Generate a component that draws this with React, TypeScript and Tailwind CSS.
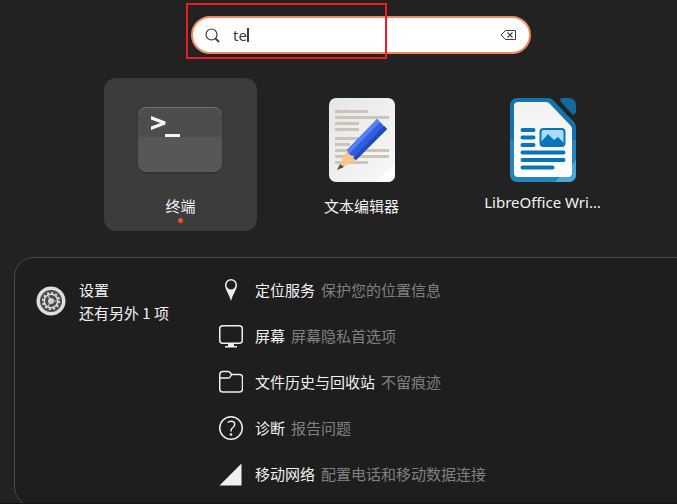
import { useState } from "react";
import type { ReactNode } from "react";

type Result = { title: string; description: string; icon: ReactNode };

function TerminalIcon() {
  return (
    <svg width="87" height="68" viewBox="0 0 87 68" aria-hidden="true">
      <defs>
        <clipPath id="terminal-body">
          <rect x="1" y="1" width="84" height="65" rx="8" />
        </clipPath>
      </defs>
      <rect x="0.5" y="1" width="85" height="66.5" rx="8.5" fill="#303030" />
      <g clipPath="url(#terminal-body)">
        <rect x="1" y="1" width="84" height="30" fill="#4d4d4d" />
        <rect x="1" y="31" width="84" height="35" fill="#575757" />
      </g>
      <path d="M2 8a7 7 0 0 1 7-6.500h68a7 7 0 0 1 7 6.500" fill="none" stroke="#727272" />
      <path d="M14 10v3.600L23.500 17 14 20.500V24l14.500-5.600v-2.800z" fill="#f4f4f4" />
      <rect x="28" y="28" width="15" height="3" fill="#f4f4f4" />
    </svg>
  );
}

function EditorIcon() {
  return (
    <svg width="66" height="84" viewBox="0 0 66 84" aria-hidden="true">
      <defs>
        <linearGradient id="paper" x1="0" y1="0" x2="1" y2="1">
          <stop offset="0" stopColor="#e6e6e6" />
          <stop offset="1" stopColor="#f8f8f8" />
        </linearGradient>
      </defs>
      <rect width="66" height="84" rx="7" fill="url(#paper)" />
      <path d="M66 65v12a7 7 0 0 1-7 7H47z" fill="#fff" />
      <g fill="#c9c5b9">
        <rect x="6" y="12" width="33" height="3" />
        <rect x="6" y="18" width="54" height="3" />
        <rect x="6" y="24" width="24" height="3" />
        <rect x="6" y="30" width="24" height="3" />
        <rect x="6" y="39" width="33" height="3" />
        <rect x="6" y="45" width="15" height="3" />
        <rect x="6" y="51" width="54" height="3" />
        <rect x="6" y="57" width="54" height="3" />
        <rect x="6" y="63" width="33" height="3" />
      </g>
      <path d="M8 72 18 52l10 10z" fill="#ffc58b" />
      <path d="M8 72l3-6 4 3z" fill="#505050" />
      <path d="M18 52 48 21l10 10-31 31-2-4-4-1z" fill="#2f5fe0" />
      <path d="M18 52 48 21l3 3-31 32z" fill="#5482f2" />
      <path d="M24 60 55 28l3 3-31 31z" fill="#204bb8" />
    </svg>
  );
}

function WriterIcon() {
  return (
    <svg width="66" height="84" viewBox="0 0 66 84" aria-hidden="true">
      <defs>
        <linearGradient id="sheet" x1="0" y1="0" x2="0" y2="1">
          <stop offset="0" stopColor="#f1f1f1" />
          <stop offset="1" stopColor="#ffffff" />
        </linearGradient>
        <clipPath id="writer-edge">
          <path d="M7 0h31q3 0 5 2l21 22q2 2 2 5v48a7 7 0 0 1-7 7H7a7 7 0 0 1-7-7V7a7 7 0 0 1 7-7z" />
        </clipPath>
      </defs>
      <g clipPath="url(#writer-edge)">
        <rect width="66" height="42" fill="#1573ab" />
        <rect y="42" width="66" height="42" fill="#2584bd" />
        <path d="M66 62v22H45z" fill="#48a9d8" />
      </g>
      <path d="M8 4h28q2 0 4 2l20 21q2 2 2 4v44a4 4 0 0 1-4 4H8a4 4 0 0 1-4-4V8a4 4 0 0 1 4-4z" fill="url(#sheet)" />
      <path d="M52 0h7a7 7 0 0 1 7 7v7q-2 5-5 1L51 4q-2-4 1-4z" fill="#1269a0" />
      <g stroke="#0875b9" strokeWidth="4" strokeLinecap="round">
        <path d="M12.500 32h11M12.500 39.500h11M12.500 47h11M12.500 54.500h41M12.500 62h41M12.500 69.500h30" />
      </g>
      <rect x="30.500" y="31" width="24" height="17" rx="3" fill="#a9dcf9" stroke="#0875b9" strokeWidth="2" />
      <path d="M31 44l7-8 6 6 4-3 6 6v3H31z" fill="#0875b9" />
    </svg>
  );
}

function SettingsIcon() {
  return (
    <svg width="30" height="30" viewBox="0 0 30 30" aria-hidden="true" className="shrink-0">
      <circle cx="15" cy="15" r="14.500" fill="#dedede" />
      <circle cx="15" cy="15" r="11" fill="#4b4b4b" />
      <circle cx="15" cy="15" r="8.200" fill="none" stroke="#dedede" strokeWidth="1.800" strokeDasharray="2.100 2.193" />
      <circle cx="15" cy="15" r="6.800" fill="none" stroke="#dedede" strokeWidth="1.500" />
      <path d="M15 15 12 9.500M15 15h6.500M15 15l-3 5.500" stroke="#bdbdbd" strokeWidth="1.200" />
      <circle cx="15" cy="15" r="3" fill="#cfcfcf" />
    </svg>
  );
}

const line = { fill: "none", stroke: "#efefef", strokeWidth: 1.5 } as const;

const results: Result[] = [
  {
    title: "定位服务",
    description: "保护您的位置信息",
    icon: (
      <path
        d="M12 1a6 6 0 0 0-6 6c0 4 4 9 6 16 2-7 6-12 6-16a6 6 0 0 0-6-6zm0 1.500a4.500 4.500 0 1 1 0 9 4.500 4.500 0 0 1 0-9z"
        fill="#efefef"
        fillRule="evenodd"
      />
    ),
  },
  {
    title: "屏幕",
    description: "屏幕隐私首选项",
    icon: (
      <>
        <rect x="0.750" y="1.750" width="22.500" height="17.500" rx="3" {...line} />
        <path d="M9 19h6v3h3v1.500H6V22h3z" fill="#efefef" />
      </>
    ),
  },
  {
    title: "文件历史与回收站",
    description: "不留痕迹",
    icon: (
      <>
        <path d="M.75 18V4.500a3 3 0 0 1 3-3H9q1.500 0 2.500 1.500l1 1.500h8a3 3 0 0 1 3 3V19a3 3 0 0 1-3 3H3.750a3 3 0 0 1-3-3z" {...line} />
        <path d="M.75 8h8.500q1.500 0 2.300-1.500l1-2" {...line} />
      </>
    ),
  },
  {
    title: "诊断",
    description: "报告问题",
    icon: (
      <>
        <circle cx="12" cy="12" r="11.250" {...line} />
        <path d="M8.700 6.500q1.300-1.300 3.300-1.300 3.700 0 3.700 3 0 1.800-1.800 3.300-1.900 1.500-1.900 3.300v.7" {...line} />
        <circle cx="12" cy="18.500" r="1.300" fill="#efefef" />
      </>
    ),
  },
  {
    title: "移动网络",
    description: "配置电话和移动数据连接",
    icon: <path d="M.5 23.500 22.500 1.500v22z" fill="#efefef" />,
  },
];

function AppTile({ name, icon, active }: { name: string; icon: ReactNode; active?: boolean }) {
  return (
    <button
      type="button"
      className={
        active
          ? "flex h-[153px] w-[153px] flex-col items-center rounded-xl bg-[#3c3c3c] pt-5"
          : "flex h-[153px] w-[153px] flex-col items-center rounded-xl pt-5"
      }
    >
      <span className="flex h-[84px] items-center justify-center">{icon}</span>
      {/* Latin labels sit on a shorter line than Chinese ones */}
      <span className={/^[A-Z]/.test(name) ? "mt-3 leading-4" : "mt-3 leading-6"}>{name}</span>
      {active && <span className="size-[5px] rounded-full bg-[#e95420]" />}
    </button>
  );
}

export default function App() {
  const [query, setQuery] = useState("te");
  return (
    <main className="relative h-screen overflow-hidden border-b border-[#1b1016] bg-[#222222] font-['Noto_Sans','Noto_Sans_CJK_SC',sans-serif] text-[15px] text-[#f2f2f2]">
      <div className="pt-4 pl-[45px]">
        <form
          role="search"
          className="mx-auto flex h-[38px] w-[340px] items-center rounded-full border-2 border-[#f08763] bg-white px-3 text-[#3d3d3d]"
        >
          <svg width="15" height="15" viewBox="0 0 15 15" fill="none" stroke="#3d3d3d" aria-hidden="true">
            <circle cx="6.500" cy="6.500" r="5.500" strokeWidth="1.200" />
            <path d="m10.500 10.500 3.500 3.500" strokeWidth="1.800" />
          </svg>
          <div className="ml-[13px] flex min-w-0 flex-1 items-center">
            <input
              aria-label="搜索"
              value={query}
              onChange={(event) => setQuery(event.target.value)}
              className="field-sizing-content max-w-full outline-none"
            />
            <span className="h-[14px] w-[2px] bg-[#3d3d3d]" />
          </div>
          <button type="button" aria-label="清除" onClick={() => setQuery("")}>
            <svg width="17" height="12" viewBox="0 0 17 12" fill="none" stroke="#3d3d3d" aria-hidden="true">
              <path d="M5.500 1.500h10v9h-10L1 6z" />
              <path d="m7.500 3.500 5 5m0-5-5 5" strokeWidth="1.200" />
            </svg>
          </button>
        </form>
      </div>
      <div className="mt-6 flex justify-center gap-7 pl-[46px]">
        <AppTile name="终端" icon={<TerminalIcon />} active />
        <AppTile name="文本编辑器" icon={<EditorIcon />} />
        <AppTile name="LibreOffice Wri…" icon={<WriterIcon />} />
      </div>

      <section className="mt-[26px] -mr-8 ml-[14px] flex rounded-[20px] border border-[#484848] bg-[#1e1e1e] py-[9px] pl-[21px]">
        <button
          type="button"
          className="flex w-[183px] items-center gap-[13px] self-start pt-[11px] text-left font-['Noto_Sans_CJK_SC',sans-serif]"
        >
          <SettingsIcon />
          <span className="leading-[23px]">
            设置
            <br />
            还有另外 1 项
          </span>
        </button>
        <ul className="flex-1">
          {results.map((result) => (
            <li key={result.title}>
              <button type="button" className="flex h-[46px] items-center gap-3 text-left">
                <svg width="24" height="24" viewBox="0 0 24 24" aria-hidden="true">
                  {result.icon}
                </svg>
                <span className="flex gap-[6px]">
                  <span>{result.title}</span>
                  <span className="text-[#808080]">{result.description}</span>
                </span>
              </button>
            </li>
          ))}
        </ul>
      </section>

      <div className="pointer-events-none absolute top-[3px] left-[186px] h-[56px] w-[201px] border-2 border-[#ed1c24]" />
    </main>
  );
}
